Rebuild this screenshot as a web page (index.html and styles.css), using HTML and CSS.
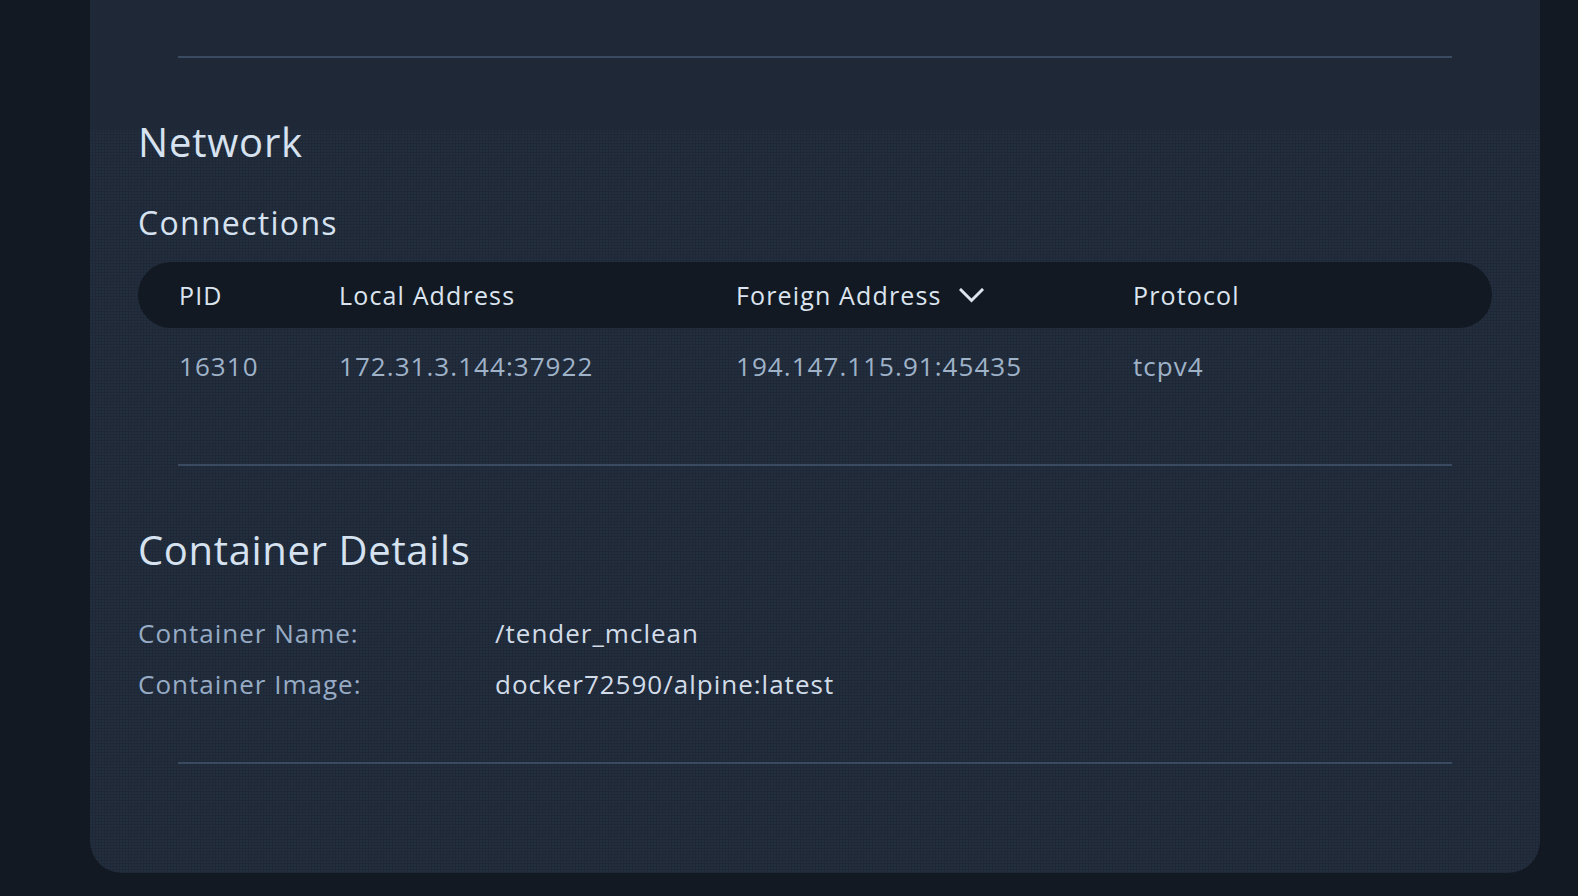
FILE: index.html
```html
<!DOCTYPE html>
<html lang="en">
<head>
<meta charset="utf-8">
<title>Process Details</title>
<link rel="stylesheet" href="styles.css">
</head>
<body>
<div class="card">
  <hr class="divider">
  <div class="content">
    <h2 class="section-title network-title">Network</h2>
    <h3 class="sub-title">Connections</h3>
    <div class="table">
      <div class="thead">
        <div class="th">PID</div>
        <div class="th">Local Address</div>
        <div class="th sorted">Foreign Address
          <svg class="chevron" width="25" height="15" viewBox="0 0 25 15" aria-hidden="true"><polyline points="2,2 12.5,12.5 23,2" fill="none" stroke="currentColor" stroke-width="3" stroke-linecap="square"/></svg>
        </div>
        <div class="th">Protocol</div>
      </div>
      <div class="trow">
        <div class="td">16310</div>
        <div class="td">172.31.3.144:37922</div>
        <div class="td">194.147.115.91:45435</div>
        <div class="td">tcpv4</div>
      </div>
    </div>
    <hr class="divider divider-mid">
    <h2 class="section-title container-title">Container Details</h2>
    <div class="details">
      <div class="label">Container Name:</div>
      <div class="value">/tender_mclean</div>
      <div class="label">Container Image:</div>
      <div class="value">docker72590/alpine:latest</div>
    </div>
    <hr class="divider divider-end">
  </div>
</div>
</body>
</html>
```
FILE: styles.css
```css
html, body {
  margin: 0;
  padding: 0;
}
body {
  background: #121922;
  height: 896px;
  overflow: hidden;
  font-family: "Open Sans", "Noto Sans", sans-serif;
}
.card {
  box-sizing: border-box;
  width: 1450px;
  margin: 0 0 0 90px;
  padding: 56px 0 109px;
  background:
    linear-gradient(#1e2837, #1e2837) top left / 100% 130px no-repeat,
    radial-gradient(circle at 1px 1px, rgba(130, 160, 195, 0.05) 0.8px, transparent 1.3px) 0 0 / 3px 3px,
    #1e2837;
  border-radius: 0 0 32px 32px;
  overflow: hidden;
}
.divider {
  border: 0;
  height: 2px;
  margin: 0 88px;
  background: #3a4a61;
}
.content {
  padding: 0 48px;
}
.content .divider {
  margin: 0 40px;
}
.section-title {
  margin: 0;
  font-family: "Open Sans", "Noto Sans", sans-serif;
  font-weight: 400;
  font-size: 40px;
  line-height: 48px;
  color: #d6e2f0;
  letter-spacing: 0.8px;
}
.network-title {
  padding-top: 60px;
}
.container-title {
  margin-top: 60px;
  letter-spacing: 0.65px;
}
.sub-title {
  margin: 39px 0 0;
  font-family: "Open Sans", "Noto Sans", sans-serif;
  font-weight: 400;
  font-size: 32px;
  line-height: 36px;
  color: #d6e2f0;
  letter-spacing: 1.3px;
}
.table {
  margin-top: 21px;
}
.thead, .trow {
  display: grid;
  grid-template-columns: 160px 397px 397px 1fr;
  padding-left: 41px;
}
.thead {
  height: 66px;
  border-radius: 33px;
  background: #121922;
  align-items: center;
}
.th {
  font-size: 25px;
  line-height: 30px;
  color: #dbe4ef;
  letter-spacing: 1.15px;
  display: flex;
  align-items: center;
}
.chevron {
  margin-left: 17px;
  color: #dbe4ef;
}
.trow {
  height: 76px;
  align-items: center;
}
.td {
  font-size: 26px;
  line-height: 36px;
  letter-spacing: 1.05px;
  color: #9fb2c8;
}
.divider-mid {
  margin-top: 60px !important;
}
.details {
  margin-top: 34px;
  display: grid;
  grid-template-columns: 357px 1fr;
}
.label, .value {
  font-size: 26px;
  line-height: 51px;
  letter-spacing: 1px;
}
.label {
  color: #97abc4;
}
.value {
  color: #d2dce8;
}
.divider-end {
  margin-top: 52px !important;
}
```
